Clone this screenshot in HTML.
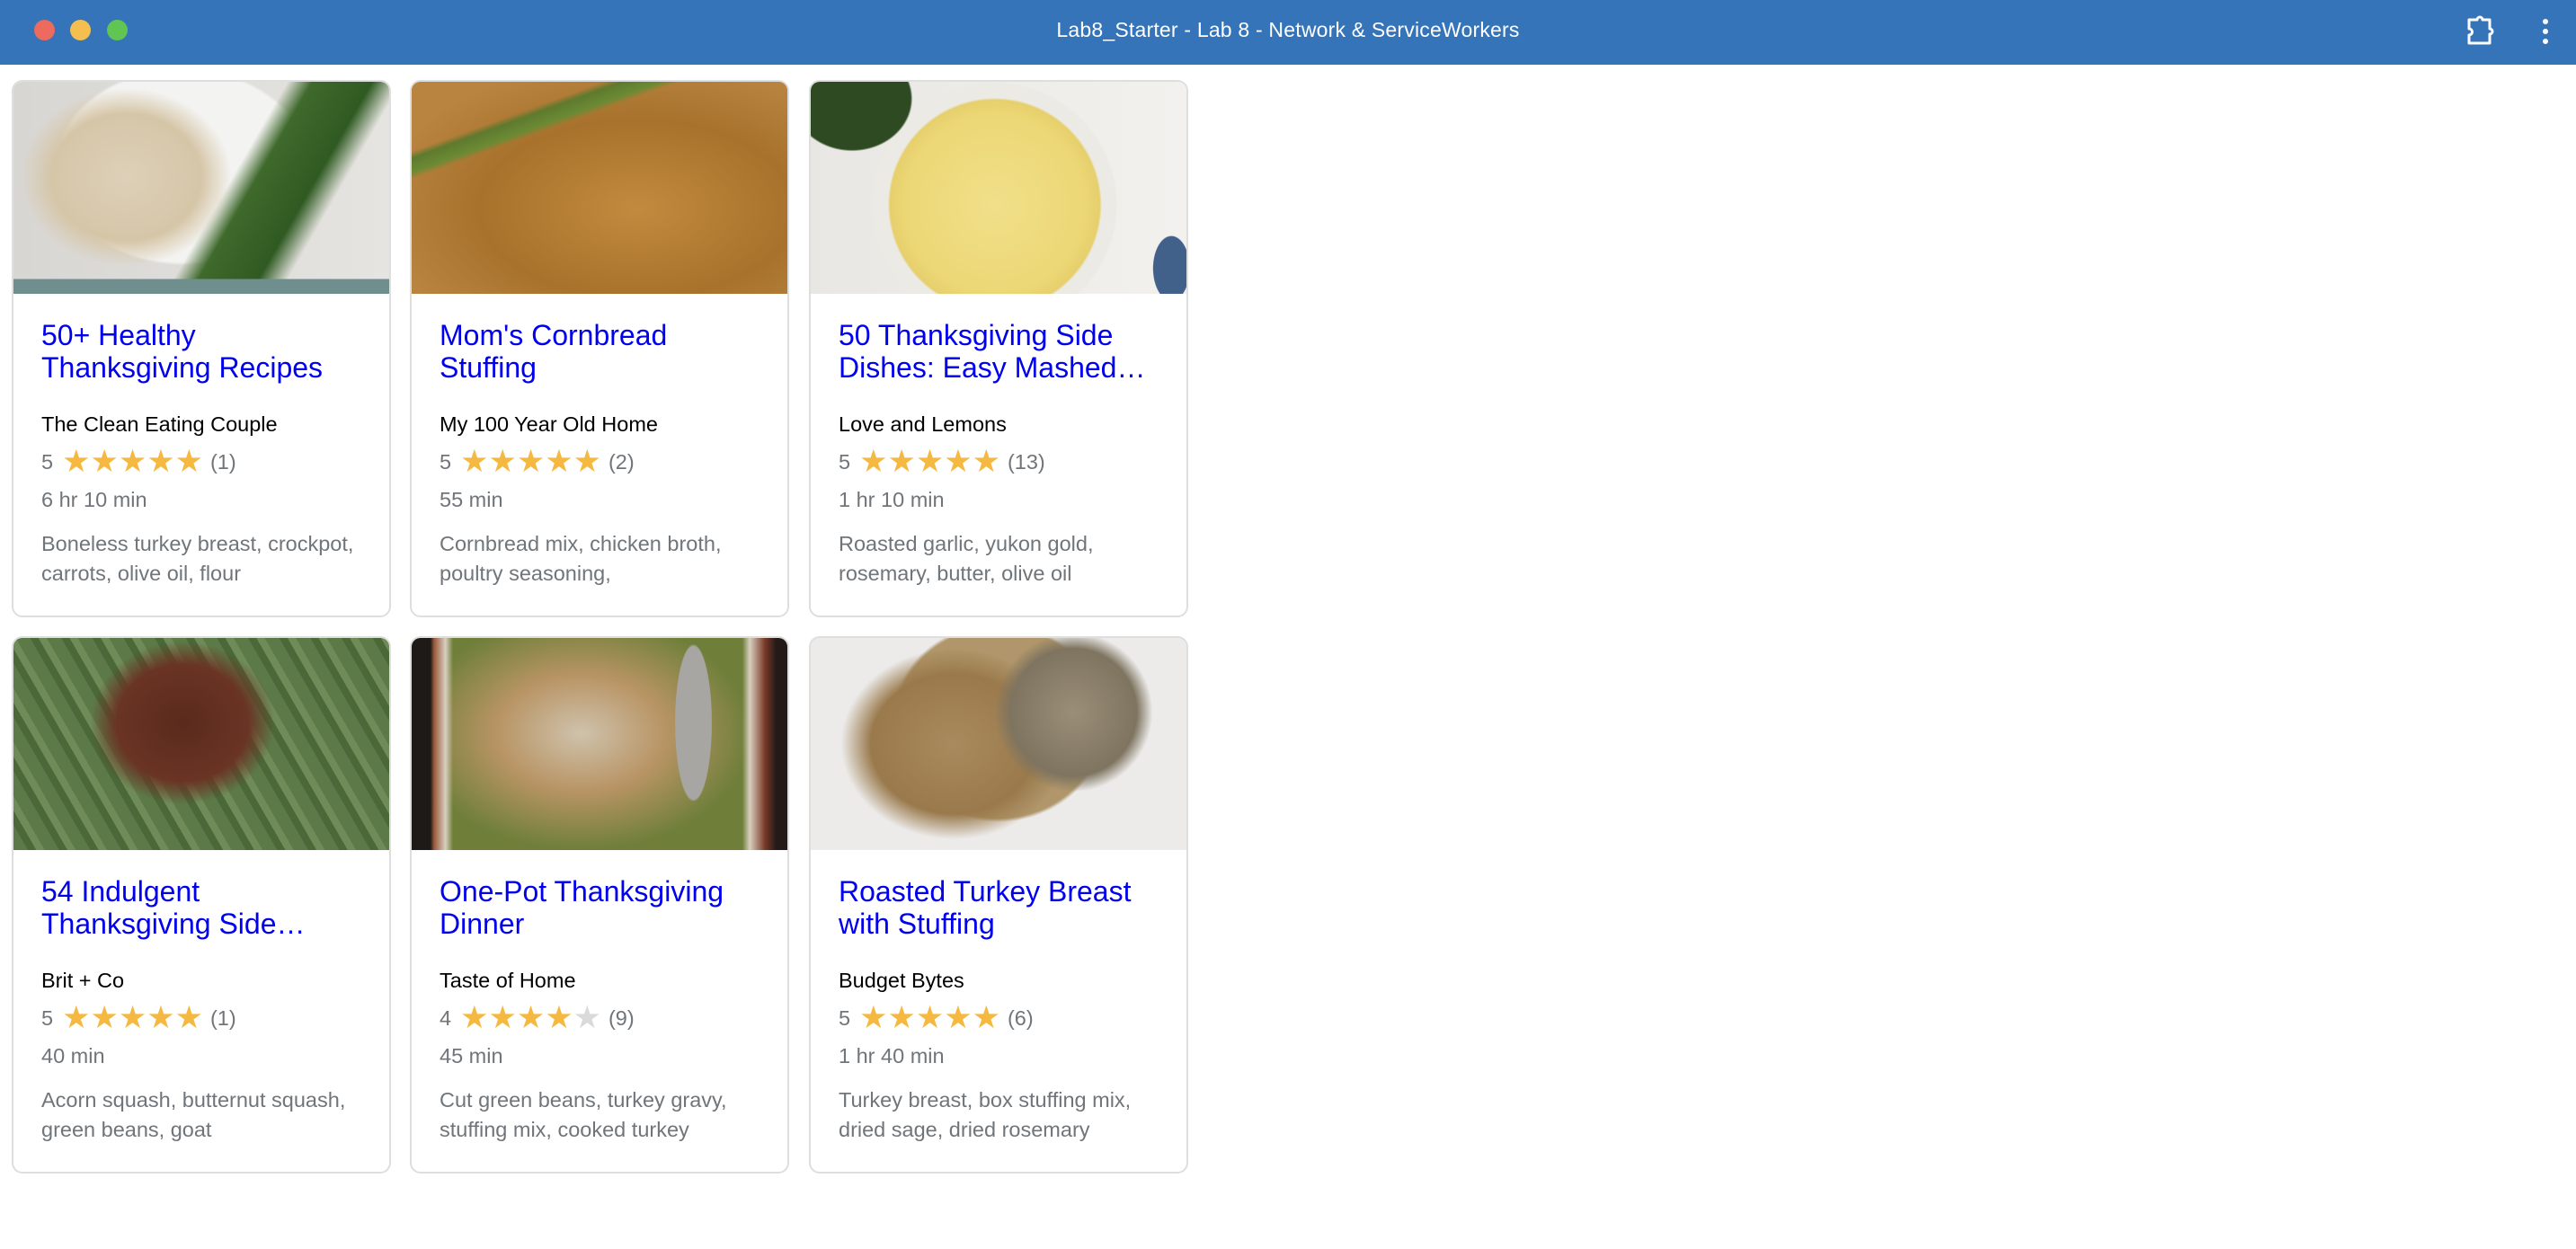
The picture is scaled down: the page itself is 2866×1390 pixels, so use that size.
<!DOCTYPE html>
<html><head><meta charset="utf-8"><style>
*{margin:0;padding:0;box-sizing:border-box}
body{width:2866px;height:1390px;background:#fff;font-family:"Liberation Sans",Arial,sans-serif;position:relative;overflow:hidden}
.bar{position:absolute;left:0;top:0;width:2866px;height:72px;background:#3574b9}
.dot{position:absolute;top:22px;width:23px;height:23px;border-radius:50%}
.ttl{position:absolute;left:0;width:2866px;top:20px;text-align:center;color:#fff;font-size:23px;letter-spacing:0.2px}
.card{position:absolute;width:422px;height:598px;border:2px solid #dedede;border-radius:12px;overflow:hidden;background:#fff}
.img{height:236px;width:100%}
.body{padding:0 31px}
.t{color:#0000ee;font-size:32px;line-height:36px;margin-top:28px;height:72px}
.a{font-size:23.5px;color:#000;margin-top:31px;line-height:28px}
.r{font-size:23.5px;color:#70757a;margin-top:14px;line-height:28px;display:flex;align-items:center}
.s{color:#f5b941;font-size:35px;letter-spacing:0px;margin:0 8px 0 10px;line-height:28px}
.s .e{color:#dadada}
.m{font-size:23.5px;color:#70757a;margin-top:14px;line-height:28px}
.i{font-size:23.5px;color:#70757a;margin-top:19px;line-height:33px}
</style></head><body>
<div class="bar">
<div class="dot" style="left:38px;background:#ec6a5e"></div>
<div class="dot" style="left:78px;background:#f4bf4f"></div>
<div class="dot" style="left:119px;background:#61c554"></div>
<div class="ttl">Lab8_Starter - Lab 8 - Network &amp; ServiceWorkers</div>
<svg style="position:absolute;left:2740px;top:14px" width="40" height="40" viewBox="0 0 40 40"><path d="M7 8h9a3 3 0 0 1 6 0h8v10a3 3 0 0 1 0 6v10H7v-9a3.5 3.5 0 0 0 0-7z" fill="none" stroke="#fff" stroke-width="3" stroke-linejoin="round"/></svg>
<svg style="position:absolute;left:2825px;top:18px" width="14" height="36"><circle cx="7" cy="6" r="3" fill="#fff"/><circle cx="7" cy="17" r="3" fill="#fff"/><circle cx="7" cy="28" r="3" fill="#fff"/></svg>
</div>

<div class="card" style="left:13px;top:89px">
<div class="img" style="background:linear-gradient(180deg,transparent 93%,#6f8f8e 93%),radial-gradient(ellipse 40% 60% at 30% 45%,#ddd0b8 0,#d6c6a8 50%,transparent 70%),linear-gradient(120deg,transparent 55%,#3f6a2c 60%,#2f5a22 72%,transparent 78%),radial-gradient(ellipse 55% 75% at 45% 40%,#f3f3f1 60%,transparent 62%),linear-gradient(90deg,#d8d6d2,#e6e4e0)"></div>
<div class="body"><div class="t">50+ Healthy Thanksgiving Recipes</div>
<div class="a">The Clean Eating Couple</div>
<div class="r">5<span class="s">★★★★★</span>(1)</div>
<div class="m">6 hr 10 min</div>
<div class="i">Boneless turkey breast, crockpot, carrots, olive oil, flour</div></div></div>

<div class="card" style="left:456px;top:89px">
<div class="img" style="background:linear-gradient(160deg,transparent 20%,#5e7a2e 22%,#6b8a34 26%,transparent 28%),radial-gradient(ellipse 70% 70% at 60% 60%,#c28a3e,#a8722c 60%,#b88440),linear-gradient(180deg,#b07a35,#9a6525)"></div>
<div class="body"><div class="t">Mom's Cornbread Stuffing</div>
<div class="a">My 100 Year Old Home</div>
<div class="r">5<span class="s">★★★★★</span>(2)</div>
<div class="m">55 min</div>
<div class="i">Cornbread mix, chicken broth, poultry seasoning,</div></div></div>

<div class="card" style="left:900px;top:89px">
<div class="img" style="background:radial-gradient(ellipse 26% 40% at 11% 8%,#2e4a22 60%,transparent 62%),radial-gradient(ellipse 8% 25% at 96% 88%,#42618a 60%,transparent 62%),radial-gradient(circle at 49% 58%,#f1e08a 0,#ecd775 40%,#e6cf6c 46%,#eceae4 47%,#eceae4 53%,transparent 54%),linear-gradient(90deg,#e9e7e3,#f2f1ee)"></div>
<div class="body"><div class="t">50 Thanksgiving Side Dishes: Easy Mashed…</div>
<div class="a">Love and Lemons</div>
<div class="r">5<span class="s">★★★★★</span>(13)</div>
<div class="m">1 hr 10 min</div>
<div class="i">Roasted garlic, yukon gold, rosemary, butter, olive oil</div></div></div>

<div class="card" style="left:13px;top:708px">
<div class="img" style="background:radial-gradient(ellipse 35% 55% at 45% 40%,#5a2a1c 0,#6a3424 50%,transparent 70%),repeating-linear-gradient(60deg,#5c7a48 0 14px,#4a6838 14px 22px,#6f8b58 22px 30px),#5a7545"></div>
<div class="body"><div class="t">54 Indulgent Thanksgiving Side…</div>
<div class="a">Brit + Co</div>
<div class="r">5<span class="s">★★★★★</span>(1)</div>
<div class="m">40 min</div>
<div class="i">Acorn squash, butternut squash, green beans, goat</div></div></div>

<div class="card" style="left:456px;top:708px">
<div class="img" style="background:linear-gradient(90deg,#1e1a18 0,#1e1a18 5%,#9a5a3c 6%,#d8cfc0 9%,transparent 11%,transparent 88%,#d8cfc0 90%,#7a3a28 94%,#241a18 97%),radial-gradient(ellipse 8% 60% at 75% 40%,#a7a6a3 60%,transparent 62%),radial-gradient(ellipse 45% 55% at 45% 45%,#cfc2ac,#b89464 50%,#6f7f3a)"></div>
<div class="body"><div class="t">One-Pot Thanksgiving Dinner</div>
<div class="a">Taste of Home</div>
<div class="r">4<span class="s">★★★★<span class="e">★</span></span>(9)</div>
<div class="m">45 min</div>
<div class="i">Cut green beans, turkey gravy, stuffing mix, cooked turkey</div></div></div>

<div class="card" style="left:900px;top:708px">
<div class="img" style="background:radial-gradient(ellipse 28% 50% at 70% 35%,#9a8e78 0,#7e7460 60%,transparent 75%),radial-gradient(ellipse 40% 60% at 38% 50%,#a88a5e 0,#9a7a4c 55%,transparent 75%),radial-gradient(ellipse 55% 90% at 50% 40%,#b0966a 50%,#ecebea 52%),#e8e7e5"></div>
<div class="body"><div class="t">Roasted Turkey Breast with Stuffing</div>
<div class="a">Budget Bytes</div>
<div class="r">5<span class="s">★★★★★</span>(6)</div>
<div class="m">1 hr 40 min</div>
<div class="i">Turkey breast, box stuffing mix, dried sage, dried rosemary</div></div></div>
</body></html>
